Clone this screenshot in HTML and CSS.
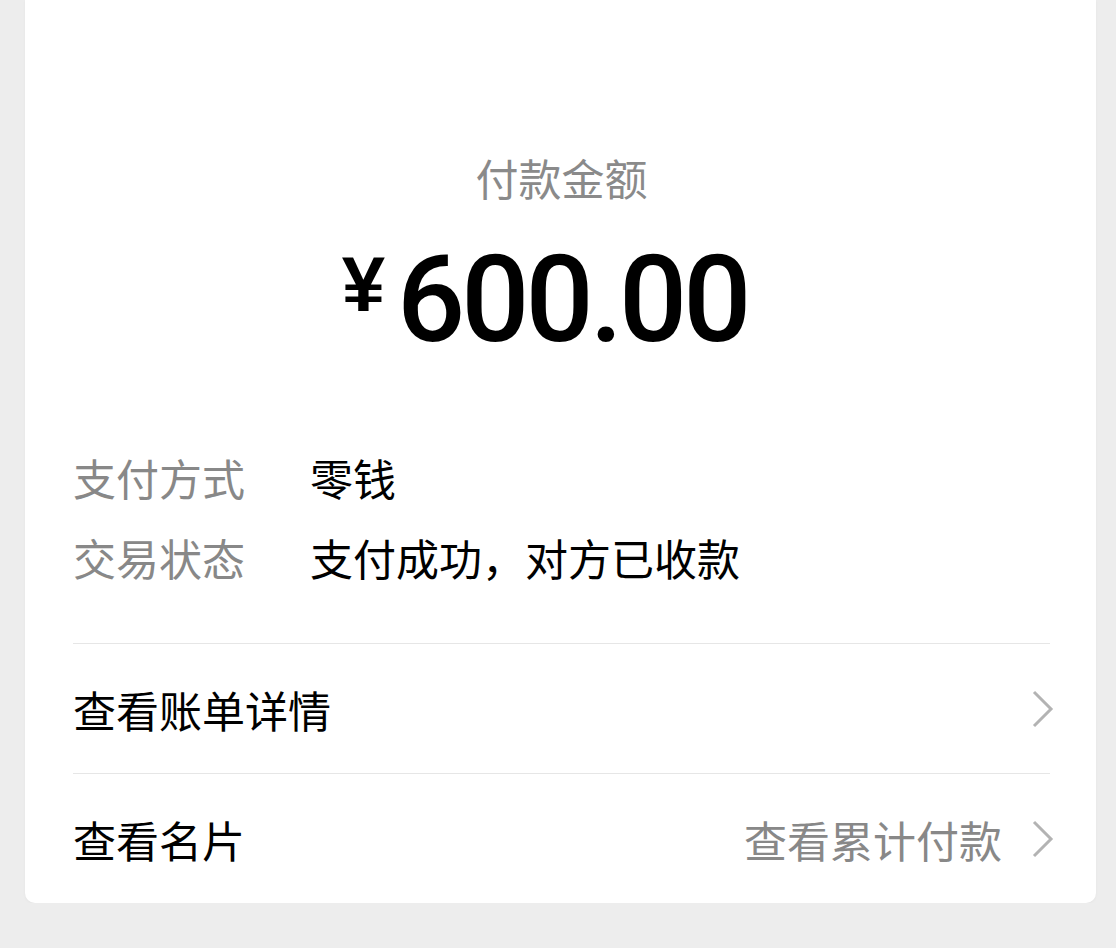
FILE: index.html
```html
<!DOCTYPE html>
<html lang="zh-CN">
<head>
    <meta charset="UTF-8">
    <meta name="viewport" content="width=device-width, initial-scale=1.0">
    <title>付款详情</title>
    <link rel="stylesheet" href="styles.css">
</head>
<body>
    <div class="pay-card">
        <div class="pay-title">付款金额</div>
        <div class="pay-amount"><span class="yen">¥</span>600.00</div>

        <div class="pay-info">
            <div class="info-label">支付方式</div>
            <div class="info-value">零钱</div>
            <div class="info-label">交易状态</div>
            <div class="info-value">支付成功，对方已收款</div>
        </div>

        <div class="pay-link">
            <span class="link-text">查看账单详情</span>
            <span class="link-right">
                <svg class="arrow" width="22" height="38" viewBox="0 0 22 38"><polyline points="2,2 19,19 2,36" fill="none" stroke="#b3b3b3" stroke-width="3"/></svg>
            </span>
        </div>
        <div class="pay-link">
            <span class="link-text">查看名片</span>
            <span class="link-right">
                <span class="link-hint">查看累计付款</span>
                <svg class="arrow" width="22" height="38" viewBox="0 0 22 38"><polyline points="2,2 19,19 2,36" fill="none" stroke="#b3b3b3" stroke-width="3"/></svg>
            </span>
        </div>
    </div>
</body>
</html>
```

FILE: styles.css
```css
* {
    margin: 0;
    padding: 0;
    box-sizing: border-box;
}

body {
    background-color: #ededed;
    font-family: "Noto Sans CJK SC", "Noto Sans", sans-serif;
    color: #111;
}

.pay-card {
    margin: 0 20px 0 25px;
    padding: 147px 46px 0 48px;
    background-color: #fff;
    border-radius: 0 0 10px 10px;
    box-shadow: 0 1px 3px rgba(0, 0, 0, 0.04);
}

.pay-title {
    text-align: center;
    font-size: 43px;
    line-height: 60px;
    color: #8a8a8a;
}

.pay-amount {
    margin-top: 28px;
    padding-right: 34px;
    display: flex;
    justify-content: center;
    align-items: flex-start;
    font-family: "Roboto", "Liberation Sans", sans-serif;
    font-weight: 500;
    font-size: 120px;
    line-height: 130px;
    height: 130px;
    letter-spacing: -4px;
    color: #000;
}

.pay-amount .yen {
    font-family: "Liberation Sans", sans-serif;
    font-weight: 700;
    font-size: 78px;
    line-height: 78px;
    letter-spacing: 0;
    margin-top: 10px;
    margin-right: 12px;
}

.pay-info {
    margin-top: 72px;
    display: grid;
    grid-template-columns: 237px auto;
    font-size: 43px;
    line-height: 80px;
}

.info-label {
    color: #888;
}

.info-value {
    color: #000;
}

.pay-link {
    height: 130px;
    border-top: 1px solid #e6e6e6;
    display: flex;
    justify-content: space-between;
    align-items: center;
    font-size: 43px;
    color: #000;
}

.pay-info + .pay-link {
    margin-top: 46px;
}

.link-right {
    display: flex;
    align-items: center;
    gap: 30px;
}

.link-hint {
    color: #888;
}

.arrow {
    display: block;
    margin-right: -4px;
}
```
